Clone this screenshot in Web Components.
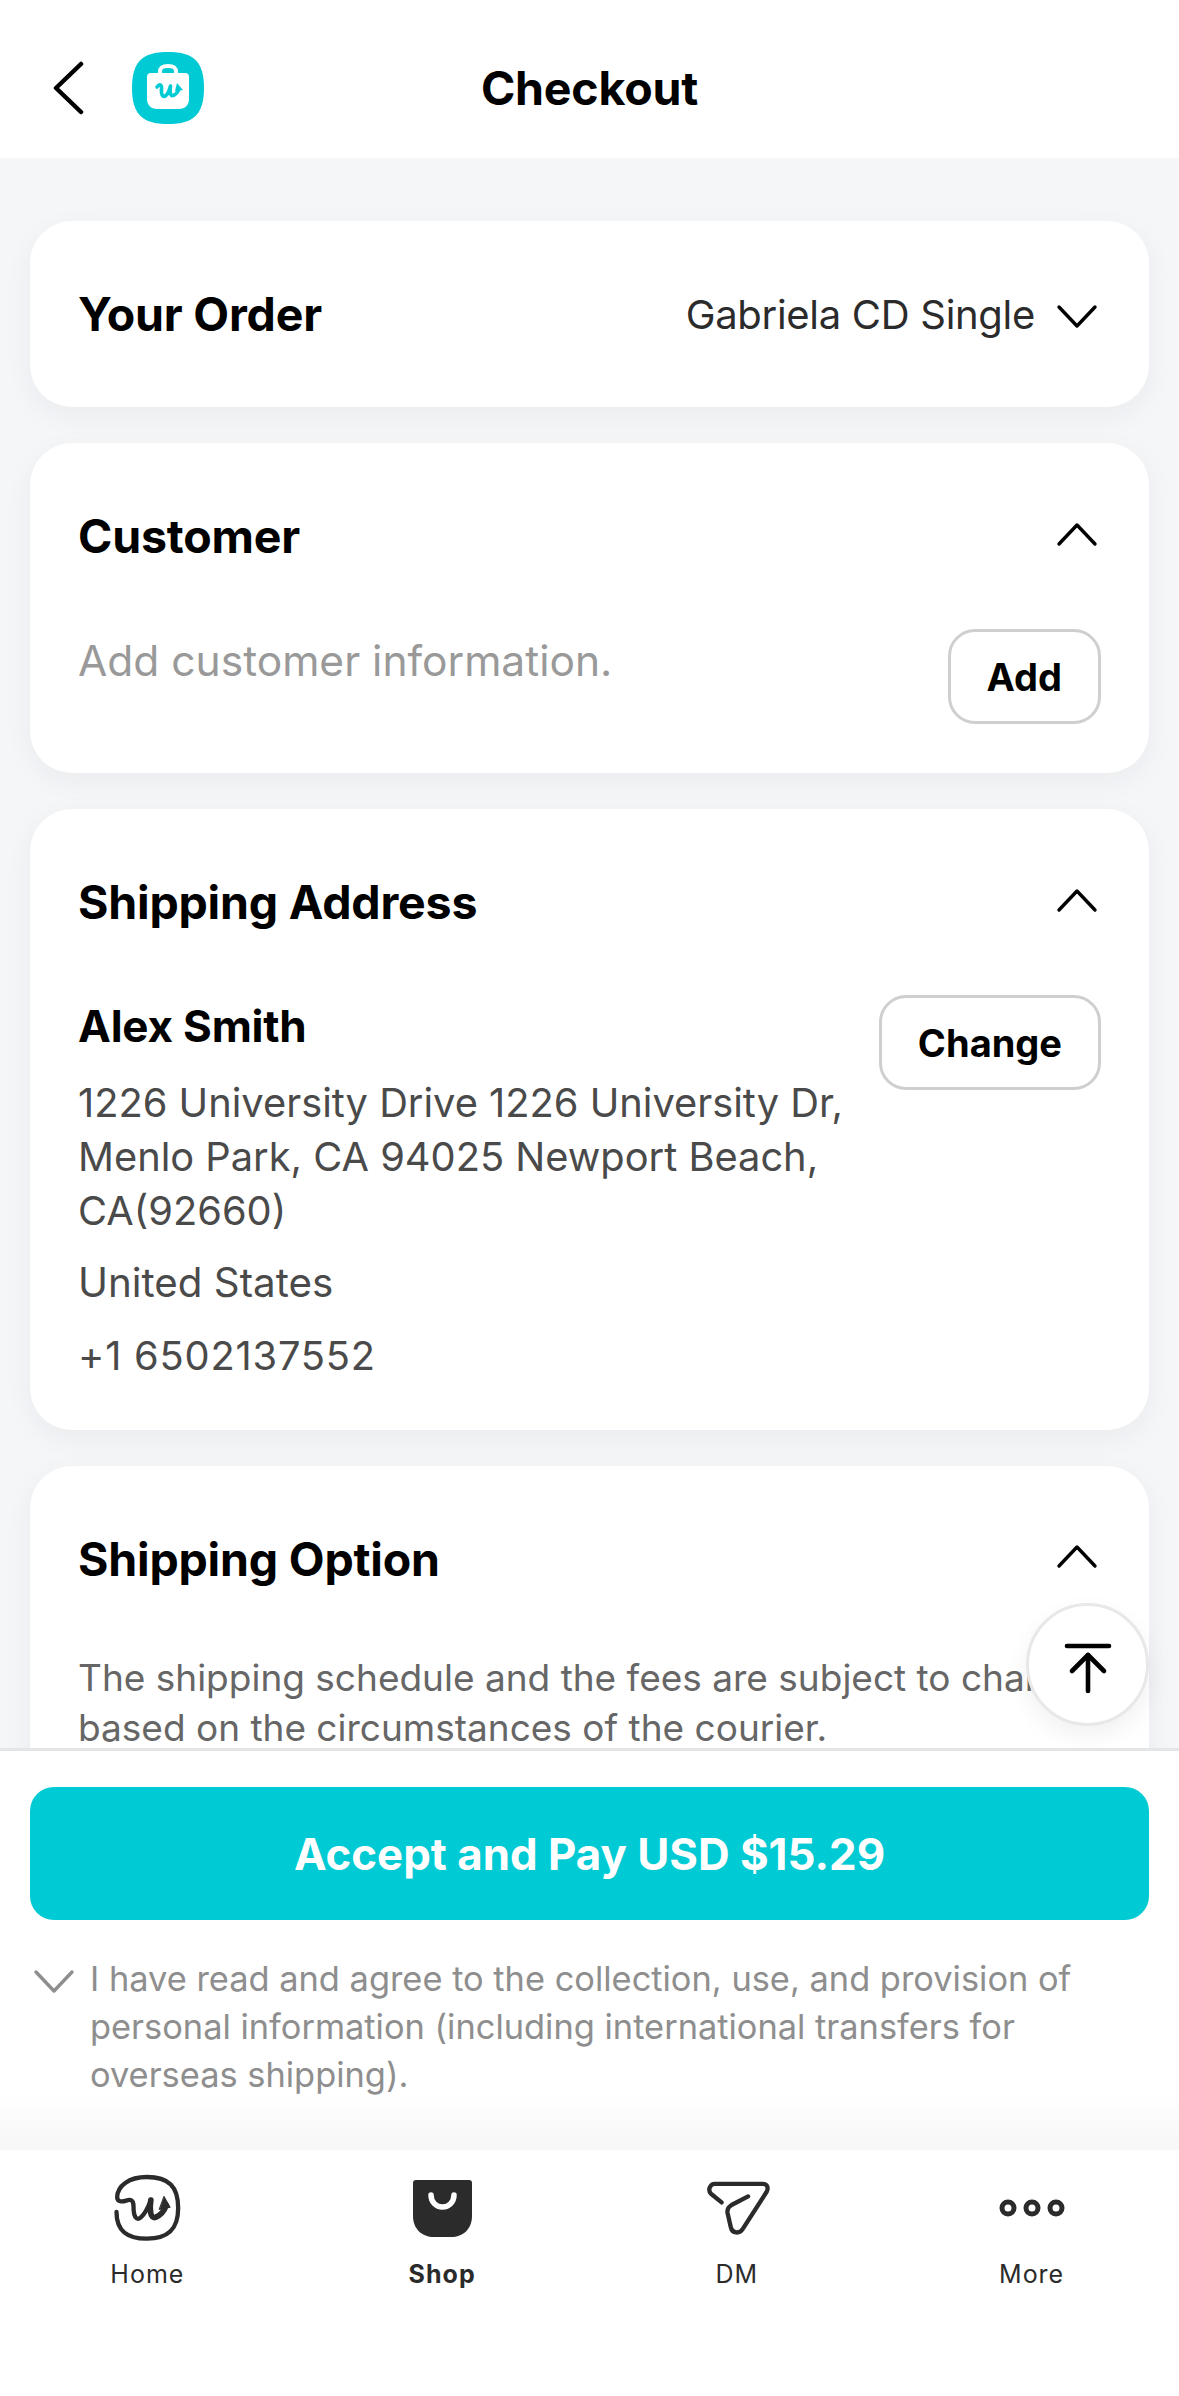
<!DOCTYPE html>
<html lang="en">
<head>
<meta charset="utf-8">
<title>Checkout</title>
<style>
  html, body { margin: 0; padding: 0; background: #fff; }
  body { font-family: Inter, "Liberation Sans", sans-serif; color: #000; }
</style>
</head>
<body>
<checkout-page>
  <checkout-header slot="header">Checkout</checkout-header>

  <checkout-card heading="Your Order" chevron="down" compact>
    <span slot="aside">Gabriela CD Single</span>
  </checkout-card>

  <checkout-card heading="Customer" chevron="up">
    <action-row action="Add">
      <muted-text>Add customer information.</muted-text>
    </action-row>
  </checkout-card>

  <checkout-card heading="Shipping Address" chevron="up">
    <action-row action="Change">
      <address-block name="Alex Smith">
        <p>1226 University Drive 1226 University Dr, Menlo Park, CA 94025 Newport Beach, CA(92660)</p>
        <p>United States</p>
        <p>+1 6502137552</p>
      </address-block>
    </action-row>
  </checkout-card>

  <checkout-card heading="Shipping Option" chevron="up">
    <note-text>The shipping schedule and the fees are subject to change<br>based on the circumstances of the courier.</note-text>
  </checkout-card>

  <scroll-top slot="overlay"></scroll-top>

  <pay-footer slot="footer" label="Accept and Pay USD $15.29">I have read and agree to the collection, use, and provision of personal information (including international transfers for overseas shipping).</pay-footer>

  <nav-bar slot="nav">
    <nav-item label="Home">
      <svg viewBox="72 68 200 204" width="67" height="68" fill="none" stroke="#2b2b2b" stroke-width="13" stroke-linecap="round" stroke-linejoin="round">
        <path d="M79 182C79 240 112 262 170 262C236 262 264 232 264 170C264 106 236 77 170 77C116 77 81 104 81 138C81 152 96 152 108 148C122 143 130 146 130 165C130 196 138 210 152 198C164 188 174 168 182 146"/>
        <path d="M182 146C178 172 180 204 196 198C210 192 222 180 228 162" stroke-width="17"/>
        <path d="M222 136L240 168L208 174Z" fill="#2b2b2b" stroke-width="3"/>
      </svg>
    </nav-item>
    <nav-item label="Shop" active>
      <svg viewBox="0 0 59 57" width="59" height="57">
        <path fill="#2b2b2b" d="M3 0H56A3 3 0 0 1 59 3V36C59 49 50 57 38 57H21C9 57 0 49 0 36V3A3 3 0 0 1 3 0Z"/>
        <path fill="none" stroke="#fff" stroke-width="5.5" stroke-linecap="round" d="M18 15C18 22 23 27 29.500 27C36 27 41 22 41 15"/>
      </svg>
    </nav-item>
    <nav-item label="DM">
      <svg viewBox="78 90 190 165" width="63" height="55" style="margin-left:3px" fill="none" stroke="#2b2b2b" stroke-width="13" stroke-linecap="round" stroke-linejoin="round">
        <path d="M122 154L90 128C80 118 86 98 102 98H246C260 98 264 110 258 122L186 234C176 250 154 248 150 230L140 186C138 174 142 168 152 162L202 136"/>
      </svg>
    </nav-item>
    <nav-item label="More">
      <svg viewBox="0 0 66 18" width="66" height="18" fill="none" stroke="#2b2b2b" stroke-width="5">
        <circle cx="9" cy="9" r="6"/><circle cx="33" cy="9" r="6"/><circle cx="57" cy="9" r="6"/>
      </svg>
    </nav-item>
  </nav-bar>
</checkout-page>

<script>
function chevron(dir, color = "#000") {
  const d = dir === "up" ? "M6 33L24 14L42 33" : "M6 15L24 34L42 15";
  return `<svg class="${dir}" viewBox="0 0 48 48" width="48" height="48" fill="none" stroke="${color}" stroke-width="3.4" stroke-linecap="round" stroke-linejoin="round"><path d="${d}"/></svg>`;
}

class CheckoutPage extends HTMLElement {
  constructor() {
    super();
    this.attachShadow({ mode: "open" });
    this.shadowRoot.innerHTML = `
      <style>
        :host { display: flex; flex-direction: column; width: 1179px; height: 2396px; overflow: hidden; background: #fff; }
        main { position: relative; flex: 1; min-height: 0; overflow: hidden; background: #f5f6f8; }
        .cards { display: flex; flex-direction: column; gap: 36px; padding: 63px 30px 0; }
      </style>
      <slot name="header"></slot>
      <main>
        <div class="cards"><slot></slot></div>
        <slot name="overlay"></slot>
      </main>
      <slot name="footer"></slot>
      <slot name="nav"></slot>
    `;
  }
}

class CheckoutHeader extends HTMLElement {
  constructor() {
    super();
    this.attachShadow({ mode: "open" });
    this.shadowRoot.innerHTML = `
      <style>
        :host { display: grid; grid-template-columns: 1fr auto 1fr; align-items: center; box-sizing: border-box; height: 158px; padding-top: 18px; background: #fff; }
        .left { display: flex; align-items: center; gap: 48px; padding-left: 52px; }
        h1 { margin: 0; font-size: 46.5px; font-weight: 700; letter-spacing: -0.2px; color: #000; }
        svg { display: block; }
      </style>
      <div class="left">
        <svg viewBox="0 0 32 56" width="32" height="56" fill="none" stroke="#000" stroke-width="4.5" stroke-linecap="round" stroke-linejoin="round"><path d="M29 4L4 28L29 52"/></svg>
        <svg viewBox="0 0 72 72" width="72" height="72">
          <path fill="#00cad3" d="M36 0C62 0 72 10 72 36C72 62 62 72 36 72C10 72 0 62 0 36C0 10 10 0 36 0Z"/>
          <path fill="none" stroke="#fff" stroke-width="4" d="M28 23V20C28 15 31 14 36 14C41 14 44 15 44 20V23"/>
          <path fill="#fff" d="M19 21H53A4 4 0 0 1 57 25V47C57 53 53 57 47 57H25C19 57 15 53 15 47V25A4 4 0 0 1 19 21Z"/>
          <path fill="none" stroke="#00cad3" stroke-width="3.6" stroke-linecap="round" stroke-linejoin="round" d="M25 35C28 31 30 33 29.500 37C29 43 31 46 34 43.500C36 41.500 37.500 38 38.500 34C37.500 40 38.500 45 41.500 43.500C44 42 46 40 47 37"/>
          <path fill="#00cad3" d="M45 31L51 38L43 39Z"/>
        </svg>
      </div>
      <h1><slot></slot></h1>
      <div></div>
    `;
  }
}

class CheckoutCard extends HTMLElement {
  constructor() {
    super();
    this.attachShadow({ mode: "open" });
  }

  connectedCallback() {
    const heading = this.getAttribute("heading");
    const dir = this.getAttribute("chevron");
    this.shadowRoot.innerHTML = `
      <style>
        :host { display: block; background: #fff; border-radius: 42px; box-shadow: 0 8px 28px rgba(30, 40, 60, 0.05); padding: 0 48px 47px; }
        :host([compact]) { padding-bottom: 0; }
        .head { display: flex; align-items: center; height: 186px; }
        h2 { flex: 1; margin: 0; font-size: 46.5px; font-weight: 700; letter-spacing: -0.2px; color: #000; }
        .aside { font-size: 40px; letter-spacing: -0.3px; color: #2b2b2b; margin-right: 18px; }
        svg { display: block; }
        svg.up { margin-top: -3px; }
        svg.down { margin-top: 4px; }
      </style>
      <div class="head">
        <h2>${heading}</h2>
        <div class="aside"><slot name="aside"></slot></div>
        ${chevron(dir)}
      </div>
      <slot></slot>
    `;
  }
}

class ActionRow extends HTMLElement {
  constructor() {
    super();
    this.attachShadow({ mode: "open" });
  }

  connectedCallback() {
    this.shadowRoot.innerHTML = `
      <style>
        :host { display: flex; justify-content: space-between; align-items: flex-start; gap: 24px; }
        .main { flex: 1; min-width: 0; }
        button { flex: none; height: 95px; padding: 0 36px; margin: 0 0 2px; background: #fff; border: 3px solid #cfcfcf; border-radius: 27px; font: 700 38px Inter, "Liberation Sans", sans-serif; color: #000; }
      </style>
      <div class="main"><slot></slot></div>
      <button>${this.getAttribute("action")}</button>
    `;
  }
}

class MutedText extends HTMLElement {
  constructor() {
    super();
    this.attachShadow({ mode: "open" });
    this.shadowRoot.innerHTML = `
      <style>:host { display: block; margin-top: 1px; font-size: 42.5px; line-height: 62px; color: #999; }</style>
      <slot></slot>
    `;
  }
}

class AddressBlock extends HTMLElement {
  constructor() {
    super();
    this.attachShadow({ mode: "open" });
  }

  connectedCallback() {
    this.shadowRoot.innerHTML = `
      <style>
        :host { display: block; font-size: 39.8px; line-height: 54px; color: #4a4a4a; }
        .name { font-size: 44px; line-height: 62px; font-weight: 700; color: #000; letter-spacing: -0.2px; }
        ::slotted(p) { margin: 18.5px 0 0; }
        ::slotted(p:nth-of-type(2)) { font-size: 40.3px; }
        ::slotted(p:last-of-type) { letter-spacing: 0.8px; }
      </style>
      <div class="name">${this.getAttribute("name")}</div>
      <slot></slot>
    `;
  }
}

class NoteText extends HTMLElement {
  constructor() {
    super();
    this.attachShadow({ mode: "open" });
    this.shadowRoot.innerHTML = `
      <style>:host { display: block; margin-top: 1px; font-size: 37px; line-height: 50.500px; color: #666; white-space: nowrap; }</style>
      <slot></slot>
    `;
  }
}

class ScrollTop extends HTMLElement {
  constructor() {
    super();
    this.attachShadow({ mode: "open" });
    this.shadowRoot.innerHTML = `
      <style>
        :host { position: absolute; right: 30px; bottom: 22px; width: 123px; height: 123px; box-sizing: border-box; display: flex; align-items: center; justify-content: center; background: #fff; border: 3px solid #e8e8e8; border-radius: 50%; box-shadow: 0 10px 24px rgba(0, 0, 0, 0.06); }
        svg { display: block; margin-top: 12px; }
      </style>
      <svg viewBox="0 0 48 56" width="48" height="56" fill="none" stroke="#000" stroke-width="4.6" stroke-linecap="round" stroke-linejoin="round">
        <path d="M3 3H45"/><path d="M24 48V12"/><path d="M8 28L24 12L40 28"/>
      </svg>
    `;
  }
}

class PayFooter extends HTMLElement {
  constructor() {
    super();
    this.attachShadow({ mode: "open" });
  }

  connectedCallback() {
    this.shadowRoot.innerHTML = `
      <style>
        :host { display: block; box-sizing: border-box; height: 402px; padding: 36px 30px 0; border-top: 3px solid #e4e5e7; background: linear-gradient(#fff 0, #fff 342px, #f6f6f6 402px); }
        button { display: block; width: 100%; height: 133px; margin: 0; padding: 2px 0 0; border: 0; border-radius: 24px; background: #00cad3; color: #fff; font: 700 43.8px Inter, "Liberation Sans", sans-serif; }
        .agree { display: flex; gap: 12px; margin-top: 35px; font-size: 34.4px; line-height: 48px; color: #8e8e8e; }
        svg { display: block; flex: none; margin-top: 2px; }
        .text { flex: 1; padding-right: 40px; }
      </style>
      <button>${this.getAttribute("label")}</button>
      <div class="agree">
        ${chevron("down", "#8e8e8e")}
        <div class="text"><slot></slot></div>
      </div>
    `;
  }
}

class NavBar extends HTMLElement {
  constructor() {
    super();
    this.attachShadow({ mode: "open" });
    this.shadowRoot.innerHTML = `
      <style>:host { display: grid; grid-template-columns: repeat(4, 1fr); height: 246px; background: #fff; }</style>
      <slot></slot>
    `;
  }
}

class NavItem extends HTMLElement {
  constructor() {
    super();
    this.attachShadow({ mode: "open" });
  }

  connectedCallback() {
    this.shadowRoot.innerHTML = `
      <style>
        :host { display: flex; flex-direction: column; align-items: center; padding-top: 20px; font-size: 25px; letter-spacing: 1px; color: #2b2b2b; }
        :host([active]) { font-weight: 700; }
        .icon { display: flex; align-items: center; justify-content: center; height: 76px; }
        .label { margin-top: 12px; line-height: 32px; }
        ::slotted(svg) { display: block; }
      </style>
      <div class="icon"><slot></slot></div>
      <div class="label">${this.getAttribute("label")}</div>
    `;
  }
}

customElements.define("checkout-page", CheckoutPage);
customElements.define("checkout-header", CheckoutHeader);
customElements.define("checkout-card", CheckoutCard);
customElements.define("action-row", ActionRow);
customElements.define("muted-text", MutedText);
customElements.define("address-block", AddressBlock);
customElements.define("note-text", NoteText);
customElements.define("scroll-top", ScrollTop);
customElements.define("pay-footer", PayFooter);
customElements.define("nav-bar", NavBar);
customElements.define("nav-item", NavItem);
</script>
</body>
</html>
